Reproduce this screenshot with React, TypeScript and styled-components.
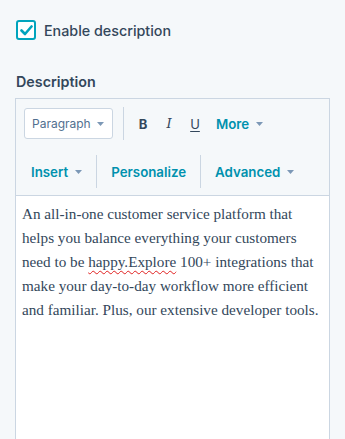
import React from "react";
import styled, { createGlobalStyle } from "styled-components";

const Global = createGlobalStyle`
  html, body {
    margin: 0;
    background: #f5f8fa;
  }
  body {
    font-family: Inter, "Noto Sans", sans-serif;
    color: #33475b;
  }
`;

const Page = styled.div`
  padding: 20px 15px 0 16px;
  display: flex;
  flex-direction: column;
  height: 439px;
  box-sizing: border-box;
`;

const CheckRow = styled.label`
  display: flex;
  align-items: center;
  gap: 8px;
  font-size: 14.3px;
  font-weight: 500;
  height: 20px;
`;

const Box = styled.span`
  width: 20px;
  height: 20px;
  box-sizing: border-box;
  border: 2px solid #00a4bd;
  border-radius: 3px;
  background: #fff;
  display: flex;
  align-items: center;
  justify-content: center;
`;

const FieldLabel = styled.div`
  margin-top: 33px;
  font-size: 14.3px;
  font-weight: 600;
  line-height: 18px;
`;

const Editor = styled.div`
  margin-top: 7px;
  margin-left: -1px;
  flex: 1;
  display: flex;
  flex-direction: column;
  border: 1px solid #cbd6e2;
  border-bottom: none;
`;

const Toolbar = styled.div`
  background: #f5f8fa;
  border-bottom: 1px solid #cbd6e2;
  padding: 8px 8px 7px 8px;
  display: flex;
  flex-direction: column;
  gap: 15px;
`;

const Row = styled.div`
  display: flex;
  align-items: center;
`;

const Select = styled.div`
  width: 89px;
  height: 31px;
  box-sizing: border-box;
  border: 1px solid #cbd6e2;
  border-radius: 3px;
  background: #fff;
  display: flex;
  align-items: center;
  justify-content: space-between;
  padding: 0 8px 0 7px;
  font-size: 12px;
  color: #516f90;
`;

const Divider = styled.span<{ $left: number; $right: number }>`
  width: 1px;
  height: 33px;
  background: #cbd6e2;
  margin: 0 ${(p) => p.$right}px 0 ${(p) => p.$left}px;
`;

const Format = styled.span<{ $kind: "b" | "i" | "u" }>`
  width: 26px;
  text-align: center;
  font-size: 13px;
  color: #33475b;
  font-weight: ${(p) => (p.$kind === "b" ? 700 : 400)};
  font-style: ${(p) => (p.$kind === "i" ? "italic" : "normal")};
  text-decoration: ${(p) => (p.$kind === "u" ? "underline" : "none")};
  text-underline-offset: 2px;
  font-family: ${(p) =>
    p.$kind === "i" ? '"DejaVu Serif", serif' : "Inter, sans-serif"};
`;

const Action = styled.span<{ $lead?: number }>`
  display: flex;
  align-items: center;
  gap: 7px;
  font-size: 13.3px;
  font-weight: 600;
  color: #0091ae;
  padding: 0 7px 0 ${(p) => p.$lead ?? 7}px;
`;

const Caret = () => (
  <svg width="7" height="4" viewBox="0 0 7 4">
    <path d="M0 0h7L3.5 4z" fill="#7c98b6" />
  </svg>
);

const Content = styled.div`
  background: #fff;
  flex: 1;
  padding: 6px 3px 5px 6px;
  font-family: "Liberation Serif", serif;
  font-size: 15.2px;
  line-height: 24px;
  white-space: nowrap;
  color: #33475b;
`;

const Misspelt = styled.span`
  text-decoration: underline wavy #e02020;
  text-decoration-thickness: 1px;
  text-underline-offset: 3px;
`;

export default function App() {
  return (
    <>
      <Global />
      <Page>
        <CheckRow>
          <Box>
            <svg width="13" height="11" viewBox="0 0 13 11">
              <path
                d="M1.5 5.5l3.5 3.5 6.5-7.5"
                stroke="#00a4bd"
                strokeWidth="2.6"
                fill="none"
                strokeLinecap="round"
                strokeLinejoin="round"
              />
            </svg>
          </Box>
          Enable description
        </CheckRow>
        <FieldLabel>Description</FieldLabel>
        <Editor>
          <Toolbar>
            <Row>
              <Select>
                Paragraph <Caret />
              </Select>
              <Divider $left={10} $right={6} />
              <Format $kind="b">B</Format>
              <Format $kind="i">I</Format>
              <Format $kind="u">U</Format>
              <Action $lead={8}>
                More <Caret />
              </Action>
            </Row>
            <Row>
              <Action>
                Insert <Caret />
              </Action>
              <Divider $left={7} $right={7} />
              <Action>Personalize</Action>
              <Divider $left={7} $right={7} />
              <Action>
                Advanced <Caret />
              </Action>
            </Row>
          </Toolbar>
          <Content>
            An all-in-one customer service platform that
            <br />
            helps you balance everything your customers
            <br />
            need to be <Misspelt>happy.Explore</Misspelt> 100+ integrations that
            <br />
            make your day-to-day workflow more efficient
            <br />
            and familiar. Plus, our extensive developer tools.
          </Content>
        </Editor>
      </Page>
    </>
  );
}
